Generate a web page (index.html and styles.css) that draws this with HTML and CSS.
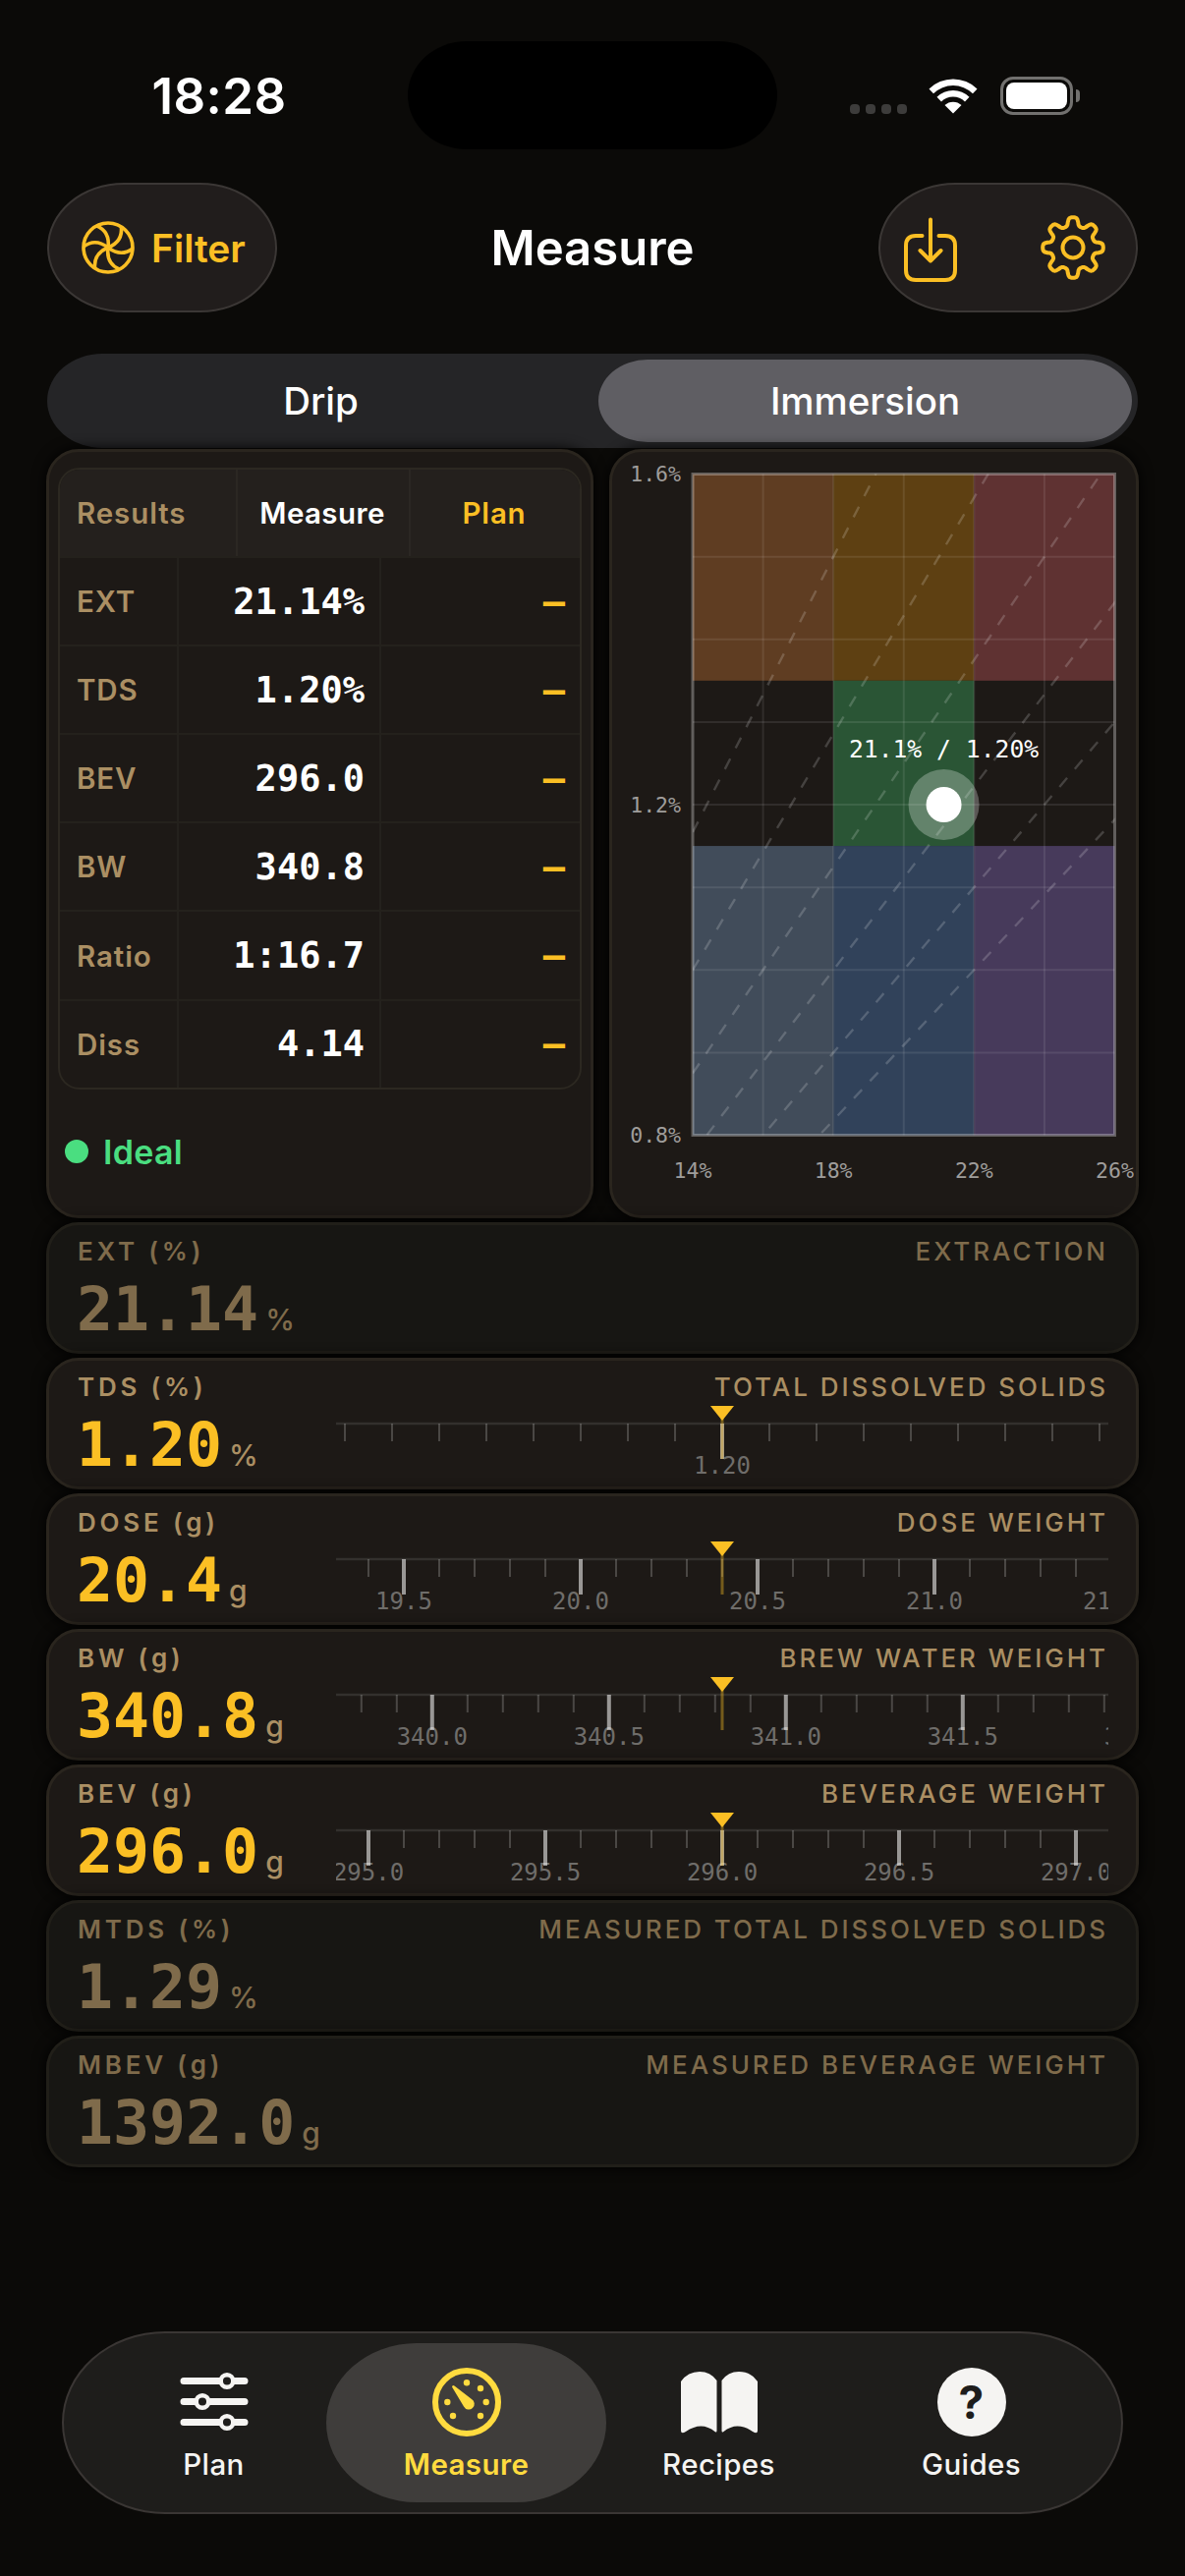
FILE: index.html
```html
<!DOCTYPE html>
<html lang="en">
<head>
    <meta charset="UTF-8">
    <title>Measure</title>
    <link rel="stylesheet" href="styles.css">
</head>
<body>
    <div class="status-bar">
        <div class="time">18:28</div>
        <div class="island"></div>
        <div class="status-icons">
            <div class="signal"><i></i><i></i><i></i><i></i></div>
            <svg class="wifi" width="52" height="38" viewBox="0 0 52 38">
                <path d="M1.5 12.5A35 35 0 0 1 50.5 12.5L46 17.3A28.5 28.5 0 0 0 6 17.3Z"/>
                <path d="M9.5 20.8A23.5 23.5 0 0 1 42.5 20.8L38 25.5A17 17 0 0 0 14 25.5Z"/>
                <path d="M17.5 29A12.5 12.5 0 0 1 34.5 29L26 37.5Z"/>
            </svg>
            <div class="battery"><div class="battery-fill"></div></div>
            <div class="battery-cap"></div>
        </div>
    </div>

    <header>
        <button class="pill filter-btn">
            <svg width="54" height="54" viewBox="-27 -27 54 54" fill="none" stroke="#fbbf24" stroke-width="3.6">
                <circle r="25"/>
                <path d="M0 0Q13 10 25 1"/>
                <path d="M0 0Q13 10 25 1" transform="rotate(60)"/>
                <path d="M0 0Q13 10 25 1" transform="rotate(120)"/>
                <path d="M0 0Q13 10 25 1" transform="rotate(180)"/>
                <path d="M0 0Q13 10 25 1" transform="rotate(240)"/>
                <path d="M0 0Q13 10 25 1" transform="rotate(300)"/>
            </svg>
            <span>Filter</span>
        </button>
        <h1>Measure</h1>
        <div class="pill actions">
            <svg class="save" width="54" height="66" viewBox="0 0 54 66" fill="none" stroke="#fbbf24" stroke-width="4" stroke-linecap="round" stroke-linejoin="round">
                <path d="M18.5 19H12Q2 19 2 29V54Q2 64 12 64H42Q52 64 52 54V29Q52 19 42 19H35.5"/>
                <path d="M27 2.5V44M16.5 34L27 44.5L37.5 34"/>
            </svg>
            <svg id="gear" width="66" height="66" viewBox="-33 -33 66 66" fill="none" stroke="#fbbf24" stroke-width="4" stroke-linejoin="round">
                <circle r="10.5"/>
                <path/>
            </svg>
        </div>
    </header>

    <main>
        <div class="segmented">
            <div class="segment">Drip</div>
            <div class="segment selected">Immersion</div>
        </div>

        <div class="panels">
            <section class="panel">
                <div class="results">
                    <div class="results-head">
                        <div>Results</div>
                        <div>Measure</div>
                        <div>Plan</div>
                    </div>
                    <div class="results-row"><div>EXT</div><div>21.14%</div><div>–</div></div>
                    <div class="results-row"><div>TDS</div><div>1.20%</div><div>–</div></div>
                    <div class="results-row"><div>BEV</div><div>296.0</div><div>–</div></div>
                    <div class="results-row"><div>BW</div><div>340.8</div><div>–</div></div>
                    <div class="results-row"><div>Ratio</div><div>1:16.7</div><div>–</div></div>
                    <div class="results-row"><div>Diss</div><div>4.14</div><div>–</div></div>
                </div>
                <div class="verdict"><span class="dot"></span>Ideal</div>
            </section>
            <section class="panel">
                <svg id="chart" width="533" height="777"></svg>
            </section>
        </div>

        <div id="cards"></div>
    </main>

    <nav class="tab-bar">
        <div class="tab">
            <svg width="80" height="74" viewBox="0 0 80 74" fill="none" stroke="#f5f4f2">
                <path stroke-width="7" stroke-linecap="round" d="M9 15.5H45M61 15.5H71M9 36.5H20M36 36.5H71M9 57.5H45M61 57.5H71"/>
                <g stroke-width="4.5"><circle cx="53" cy="15.5" r="6.3"/><circle cx="28" cy="36.5" r="6.3"/><circle cx="53" cy="57.5" r="6.3"/></g>
            </svg>
            <span>Plan</span>
        </div>
        <div class="tab active">
            <svg width="80" height="74" viewBox="-40 -37 80 74" fill="#ffdb3f">
                <circle r="32" fill="none" stroke="#ffdb3f" stroke-width="6"/>
                <circle cy="-19.7" r="3.2"/><circle cx="14" cy="-14" r="3.2"/><circle cx="19.7" r="3.2"/>
                <circle cx="14" cy="14" r="3.2"/><circle cx="-14" cy="14" r="3.2"/><circle cx="-19.7" r="3.2"/>
                <path d="M-15 -15.5Q-14.500 -18 -12.500 -16.5L5 -3A5.7 5.7 0 1 1 -3 4.5Z"/>
            </svg>
            <span>Measure</span>
        </div>
        <div class="tab">
            <svg width="80" height="74" viewBox="0 0 80 74" fill="#f5f4f2">
                <path d="M1 16Q8 6 20 6Q31 6 37.5 15V66Q37.5 68.5 35.5 67Q22 56 6 67Q1 70 1 66Z"/>
                <path d="M79 16Q72 6 60 6Q49 6 42.5 15V66Q42.5 68.5 44.5 67Q58 56 74 67Q79 70 79 66Z"/>
            </svg>
            <span>Recipes</span>
        </div>
        <div class="tab">
            <div class="help">?</div>
            <span>Guides</span>
        </div>
    </nav>

    <script>
        const cards = [
            { label: "EXT (%)", name: "EXTRACTION", value: "21.14", unit: "%" },
            { label: "TDS (%)", name: "TOTAL DISSOLVED SOLIDS", value: "1.20", unit: "%", scale: { at: 1.2, step: 0.01, major: 20, px: 48, digits: 2 } },
            { label: "DOSE (g)", name: "DOSE WEIGHT", value: "20.4", unit: "g", scale: { at: 20.4, step: 0.1, major: 5, px: 36, digits: 1 } },
            { label: "BW (g)", name: "BREW WATER WEIGHT", value: "340.8", unit: "g", scale: { at: 340.82, step: 0.1, major: 5, px: 36, digits: 1 } },
            { label: "BEV (g)", name: "BEVERAGE WEIGHT", value: "296.0", unit: "g", scale: { at: 296, step: 0.1, major: 5, px: 36, digits: 1 } },
            { label: "MTDS (%)", name: "MEASURED TOTAL DISSOLVED SOLIDS", value: "1.29", unit: "%" },
            { label: "MBEV (g)", name: "MEASURED BEVERAGE WEIGHT", value: "1392.0", unit: "g" }
        ];

        function ruler(s) {
            const mid = 393;
            let out = `<svg class="ruler" width="786" height="85"><path d="M0 19H786" stroke="#33302d" stroke-width="2.5"/>`;
            const first = Math.ceil(s.at / s.step - 12 - 0.001);
            for (let i = first; i < first + 27; i++) {
                const x = mid + (i - s.at / s.step) * s.px;
                if (i % s.major === 0) {
                    out += `<text x="${x}" y="70">${(i * s.step).toFixed(s.digits)}</text>`;
                    out += `<rect x="${x - 2}" y="19" width="4" height="36" fill="#fff" fill-opacity=".55"/>`;
                } else {
                    out += `<rect x="${x - 1}" y="19" width="2" height="18" fill="#fff" fill-opacity=".2"/>`;
                }
            }
            out += `<rect x="${mid - 1.5}" y="14" width="3" height="41" fill="#fbbf24" fill-opacity=".4"/>`;
            out += `<path d="M${mid - 12} 1H${mid + 12}L${mid} 16Z" fill="#fbbf24"/></svg>`;
            return out;
        }

        document.getElementById("cards").innerHTML = cards.map(c => `
            <div class="card ${c.scale ? "" : "dim"}">
                <div class="card-top"><span>${c.label}</span><span class="card-name">${c.name}</span></div>
                <div class="card-bottom">
                    <div class="value">${c.value}<small>${c.unit}</small></div>
                    ${c.scale ? ruler(c.scale) : ""}
                </div>
            </div>`).join("");

        // brewing control chart: extraction on x, strength on y
        const left = 82, top0 = 22.5, w = 429.5, h = 673;
        const px = e => left + (e - 14) / 12 * w;
        const py = t => top0 + (1.6 - t) / 0.8 * h;
        const zones = [
            [14, 18, 1.6, 1.35, "#5f3d22"], [18, 22, 1.6, 1.35, "#5e4012"], [22, 26, 1.6, 1.35, "#5f3232"],
            [18, 22, 1.35, 1.15, "#2a5535"],
            [14, 18, 1.15, 0.8, "#414c5a"], [18, 22, 1.15, 0.8, "#31425a"], [22, 26, 1.15, 0.8, "#473a5b"]
        ];
        let svg = `<clipPath id="plot"><rect x="${left}" y="${top0}" width="${w}" height="${h}"/></clipPath>`;
        zones.forEach(([a, b, t, u, color]) => {
            svg += `<rect x="${px(a)}" y="${py(t)}" width="${px(b) - px(a)}" height="${py(u) - py(t)}" fill="${color}"/>`;
        });
        for (let e = 16; e < 26; e += 2) svg += `<path class="grid" d="M${px(e)} ${top0}V${top0 + h}"/>`;
        for (let t = 9; t < 16; t++) svg += `<path class="grid" d="M${left} ${py(t / 10)}H${left + w}"/>`;
        [12, 14, 16, 18, 20, 22].forEach(r => {
            svg += `<path class="ratio" clip-path="url(#plot)" d="M${px(14)} ${py(14 / r)}L${px(28)} ${py(28 / r)}"/>`;
        });
        svg += `<rect class="frame" x="${left}" y="${top0}" width="${w}" height="${h}"/>`;
        [1.6, 1.2, 0.8].forEach(t => svg += `<text class="tick end" x="70" y="${py(t) + 7.5}">${t.toFixed(1)}%</text>`);
        [14, 18, 22, 26].forEach(e => svg += `<text class="tick" x="${px(e)}" y="739">${e}%</text>`);
        svg += `<circle cx="${px(21.14)}" cy="${py(1.2)}" r="36" fill="#fff" fill-opacity="0.27"/>`;
        svg += `<circle cx="${px(21.14)}" cy="${py(1.2)}" r="18" fill="#fff"/>`;
        svg += `<text class="point" x="${px(21.14)}" y="311">21.1% / 1.20%</text>`;
        document.getElementById("chart").innerHTML = svg;

        // eight-tooth gear outline
        let gear = "";
        for (let i = 0; i <= 160; i++) {
            const a = i / 160 * Math.PI * 2;
            const r = 26.5 + 4.3 * Math.tanh(2 * Math.cos(8 * a)) / Math.tanh(2);
            gear += (i ? "L" : "M") + (r * Math.sin(a)).toFixed(1) + " " + (-r * Math.cos(a)).toFixed(1);
        }
        document.querySelector("#gear path").setAttribute("d", gear + "Z");
    </script>
</body>
</html>
```
FILE: styles.css
```css
body {
    margin: 0;
    width: 1206px;
    height: 2622px;
    background: #0b0a08;
    color: #fff;
    font-family: Inter, sans-serif;
    display: flex;
    flex-direction: column;
    overflow: hidden;
    position: relative;
}

.status-bar {
    display: grid;
    grid-template-columns: 415px 376px 1fr;
    align-items: center;
    height: 110px;
    padding-top: 42px;
    padding-bottom: 34px;
}

.time {
    font-size: 51px;
    font-weight: 600;
    letter-spacing: 0.4px;
    text-align: center;
    padding-left: 31px;
}

.island {
    height: 110px;
    border-radius: 60px / 55px;
    background: #000;
}

.status-icons {
    display: flex;
    align-items: center;
    padding-left: 74px;
}

.signal {
    display: flex;
    gap: 6px;
    margin: 28px 21px 0 0;
}

.signal i {
    width: 10px;
    height: 10px;
    border-radius: 4px;
    background: #3d3c3b;
}

.wifi {
    fill: #fff;
    margin-right: 22px;
}

.battery {
    box-sizing: border-box;
    width: 74px;
    height: 39px;
    border: 3px solid #72716f;
    border-radius: 13px;
    padding: 3px;
}

.battery-fill {
    height: 27px;
    border-radius: 8px;
    background: #fff;
}

.battery-cap {
    width: 4px;
    height: 13px;
    margin-left: 3px;
    border-radius: 0 5px 5px 0;
    background: #72716f;
}

header {
    display: grid;
    grid-template-columns: 1fr auto 1fr;
    align-items: center;
    padding: 0 48px;
}

h1 {
    margin: 0;
    font-size: 49px;
    font-weight: 600;
}

.pill {
    box-sizing: border-box;
    height: 132px;
    border: 2px solid #3b3735;
    border-radius: 78px / 66px;
    background: #211d1c;
    display: flex;
    align-items: center;
}

.filter-btn {
    width: 234px;
    padding: 0 0 0 33px;
    gap: 17px;
    color: #fbbf24;
    font: 600 39px Inter, sans-serif;
}

.actions {
    justify-self: end;
    width: 264px;
    justify-content: space-between;
    padding: 0 31px 0 24px;
}

.save {
    margin-top: 4px;
}

main {
    width: 1112px;
    margin: 42px 0 0 47px;
}

.segmented {
    display: flex;
    height: 84px;
    padding: 6px;
    margin: 0 1px 1px;
    border-radius: 56px / 48px;
    background: #252527;
}

.segment {
    flex: 1;
    display: flex;
    align-items: center;
    justify-content: center;
    padding-right: 10px;
    font-size: 38.5px;
    font-weight: 500;
    border-radius: 50px / 42px;
}

.segment.selected {
    flex: 0 0 543px;
    padding-right: 0;
    background: #5f5e63;
}

.panels {
    display: grid;
    grid-template-columns: 557px 539px;
    gap: 16px;
    height: 783px;
    margin-bottom: 4px;
}

.panel, .card {
    box-sizing: border-box;
    border: 3px solid #2a251e;
    border-radius: 33px;
    background: #1d1916;
    box-shadow: 0 0 14px #000;
}

.panel {
    overflow: hidden;
}

.results {
    margin: 16px 9px 0;
    border: 2px solid #2c2821;
    border-radius: 22px;
    overflow: hidden;
}

.results-head, .results-row {
    display: grid;
    align-items: stretch;
    height: 88.1px;
    border-top: 2px solid #24211c;
    font-size: 29.5px;
    font-weight: 600;
    color: #ab8f63;
}

.results-head {
    grid-template-columns: 179px 176px 1fr;
    background: #24201d;
    border-top: none;
}

.results-row {
    grid-template-columns: 119px 206px 1fr;
}

.results-head div, .results-row div {
    display: flex;
    align-items: center;
    justify-content: center;
    border-left: 2px solid #24211d;
}

.results-head div {
    border-color: #2b2723;
}

.results div div:first-child {
    border-left: none;
    justify-content: flex-start;
    padding-left: 17px;
    letter-spacing: 0.9px;
}

.results-head div:nth-child(2) {
    padding-right: 2px;
    color: #fff;
    letter-spacing: 0.4px;
}

.results-head div:nth-child(3) {
    padding-right: 2px;
    color: #fbbf24;
    letter-spacing: 0.8px;
}

.results-row div:nth-child(2), .results-row div:nth-child(3) {
    justify-content: flex-end;
    padding-right: 15px;
    font: 700 37px "DejaVu Sans Mono", monospace;
    color: #fff;
}

.results-row div:nth-child(3) {
    color: #fbbf24;
}

.verdict {
    display: flex;
    align-items: center;
    gap: 15px;
    margin: 43px 0 0 16px;
    font-size: 34px;
    font-weight: 600;
    letter-spacing: 0.3px;
    color: #4ade80;
}

.dot {
    width: 24px;
    height: 24px;
    border-radius: 50%;
    background: #4ade80;
}

#chart {
    display: block;
}

#chart .grid {
    stroke: #fff;
    stroke-opacity: 0.09;
    stroke-width: 2;
}

#chart .ratio {
    stroke: #fff;
    stroke-opacity: 0.18;
    stroke-width: 2.4;
    stroke-dasharray: 12 12;
}

#chart .frame {
    fill: none;
    stroke: #fff;
    stroke-opacity: 0.3;
    stroke-width: 3;
}

#chart text {
    font-family: "DejaVu Sans Mono", monospace;
    text-anchor: middle;
}

#chart .tick {
    font-size: 21.5px;
    fill: #9f9d9b;
}

#chart .end {
    text-anchor: end;
}

#chart .point {
    font-size: 24.7px;
    fill: #fff;
}

#cards {
    display: flex;
    flex-direction: column;
    gap: 4px;
}

.card {
    height: 134px;
    padding: 11px 28px 0 29px;
}

.card-top {
    display: flex;
    justify-content: space-between;
    font-size: 26px;
    line-height: 32px;
    font-weight: 600;
    letter-spacing: 3.8px;
    color: #ab8f63;
}

.card-name {
    font-weight: 500;
    letter-spacing: 2.95px;
}

.card-bottom {
    display: flex;
    justify-content: space-between;
}

.value {
    padding-top: 7px;
    margin-left: -1px;
    font: 700 61.5px/72px "DejaVu Sans Mono", monospace;
    color: #fbbf24;
}

.value small {
    margin-left: 7px;
    font: 500 30px Inter, sans-serif;
    color: #ab8f63;
}

.ruler {
    width: 786px;
    margin: 2px 0 0;
}

.ruler text {
    font: 24px "DejaVu Sans Mono", monospace;
    text-anchor: middle;
    fill: #6f6d6a;
}

.dim {
    background: #171613;
    border-color: #211f19;
}

.dim .card-top, .dim .value, .dim small {
    color: #7f6b4b;
}

.tab-bar {
    position: absolute;
    left: 63px;
    top: 2373px;
    box-sizing: border-box;
    width: 1080px;
    height: 186px;
    padding: 10px 24px;
    display: grid;
    grid-template-columns: repeat(4, 257px);
    border: 2px solid #3a3634;
    border-radius: 105px / 93px;
    background: #1e1d1b;
}

.tab {
    display: flex;
    flex-direction: column;
    align-items: center;
    margin: 0 -14px;
    padding-top: 23px;
    border-radius: 92px / 81px;
    font-size: 29.5px;
    font-weight: 500;
    line-height: 36px;
    letter-spacing: 0.4px;
    color: #f5f4f2;
}

.tab span {
    margin-top: 8px;
}

.tab.active {
    background: #3f3d3b;
    color: #ffdb3f;
    font-weight: 600;
}

.help {
    width: 70px;
    height: 70px;
    margin: 2px 0;
    border-radius: 50%;
    background: #f5f4f2;
    color: #1e1d1b;
    font-size: 46px;
    font-weight: 700;
    line-height: 70px;
    text-align: center;
}
```
